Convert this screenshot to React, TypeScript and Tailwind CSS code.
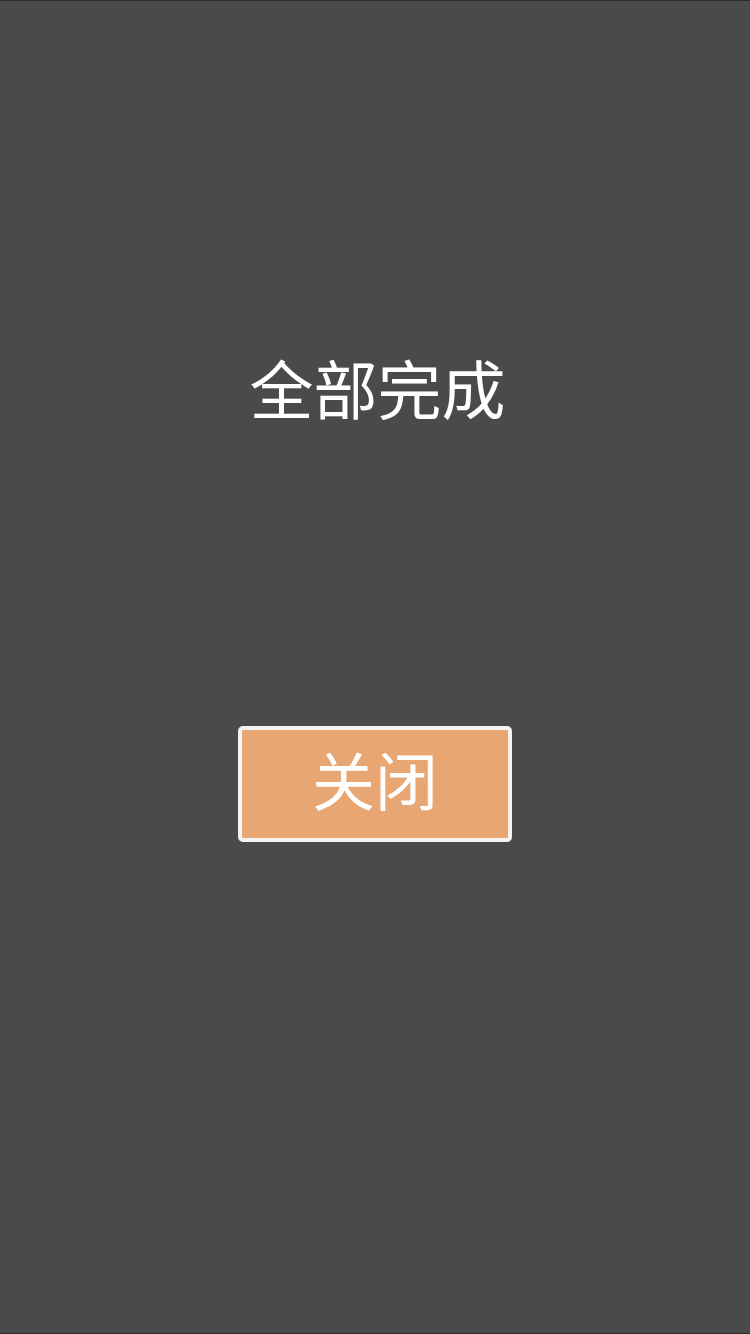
import React from 'react';

const App: React.FC = () => {
  return (
    <div
      className="w-[750px] h-[1334px] bg-[#4a4a4a] border-y border-[#2b2b2b] flex flex-col items-center"
      style={{ fontFamily: '"Noto Sans CJK SC", "Noto Sans", sans-serif' }}
    >
      <h1 className="mt-[347px] text-[64px] leading-[76px] font-normal text-white pl-[5px]">
        全部完成
      </h1>
      <button
        type="button"
        className="mt-[302px] w-[274px] h-[116px] rounded-[5px] border-4 border-[#f4f4f4] bg-[#e8a673] text-white text-[63px] leading-none flex items-center justify-center pb-[14px]"
      >
        关闭
      </button>
    </div>
  );
};

export default App;
